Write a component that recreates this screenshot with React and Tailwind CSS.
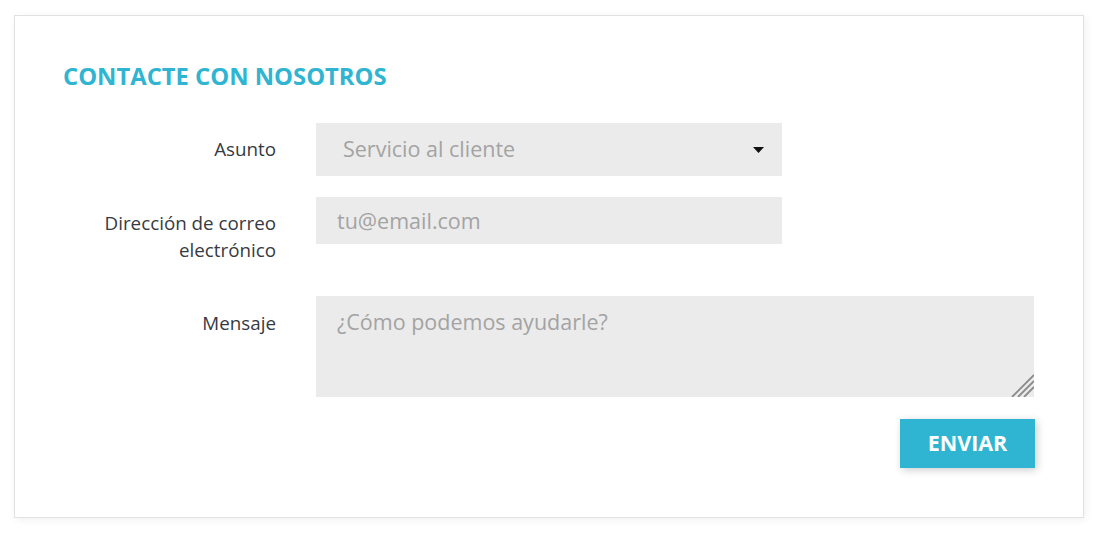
import { useState } from 'react';

export default function App() {
  const [subject, setSubject] = useState('');

  return (
    <div className="min-h-[540px] bg-white pt-[15px] pl-[14px]" style={{ fontFamily: '"Open Sans", "Noto Sans", sans-serif' }}>
      <div className="w-[1070px] border border-[#e1e1e1] bg-white px-[48px] pt-[46px] pb-[49px] shadow-[2px_2px_8px_0_rgba(0,0,0,0.06)]">
        <h1 className="text-[23.8px] leading-[29px] font-bold uppercase text-[#2fb5d2]">Contacte con nosotros</h1>

        <form className="mt-[32px]" onSubmit={e => e.preventDefault()}>
          <div className="flex items-center">
            <label className="w-[213px] text-right text-[18.8px] text-[#363a42]">Asunto</label>
            <div className="relative ml-[40px] w-[466px]">
              <select
                value={subject}
                onChange={e => setSubject(e.target.value)}
                className="h-[53px] w-full appearance-none bg-[#ebebeb] pl-[27px] text-[21.5px] text-[#a3a3a3] outline-none"
              >
                <option value="">Servicio al cliente</option>
                <option value="web">Webmaster</option>
              </select>
              <svg className="pointer-events-none absolute right-[18px] top-[24px]" width="11" height="6" viewBox="0 0 11 6">
                <path d="M0 0h11L5.5 6z" fill="#111" />
              </svg>
            </div>
          </div>

          <div className="mt-[21px] flex items-start">
            <label className="w-[213px] pt-[13px] text-right text-[18.8px] leading-[27px] text-[#363a42]">
              Dirección de correo electrónico
            </label>
            <input
              type="email"
              placeholder="tu@email.com"
              className="ml-[40px] h-[47px] w-[466px] bg-[#ebebeb] px-[21px] text-[21.5px] text-[#333] placeholder:text-[#a3a3a3] outline-none"
            />
          </div>

          <div className="mt-[32px] flex items-start">
            <label className="w-[213px] pt-[14px] text-right text-[18.8px] leading-[27px] text-[#363a42]">Mensaje</label>
            <div className="relative ml-[40px] w-[718px]">
              <textarea
                placeholder="¿Cómo podemos ayudarle?"
                className="block h-[101px] w-full resize-none bg-[#ebebeb] px-[21px] pt-[11px] text-[21.5px] leading-[30px] text-[#333] placeholder:text-[#a3a3a3] outline-none"
              />
              <svg className="pointer-events-none absolute right-0 bottom-0" width="23" height="23" viewBox="0 0 23 23">
                <path d="M23 1L1 23M23 7L7 23M23 13L13 23" stroke="#8a8a8a" strokeWidth="1.8" />
              </svg>
            </div>
          </div>

          <div className="mt-[22px] flex justify-end">
            <button
              type="submit"
              className="h-[49px] w-[135px] bg-[#2fb5d2] text-[21.5px] font-bold uppercase text-white shadow-[2px_2px_8px_0_rgba(0,0,0,0.2)]"
            >
              Enviar
            </button>
          </div>
        </form>
      </div>
    </div>
  );
}
